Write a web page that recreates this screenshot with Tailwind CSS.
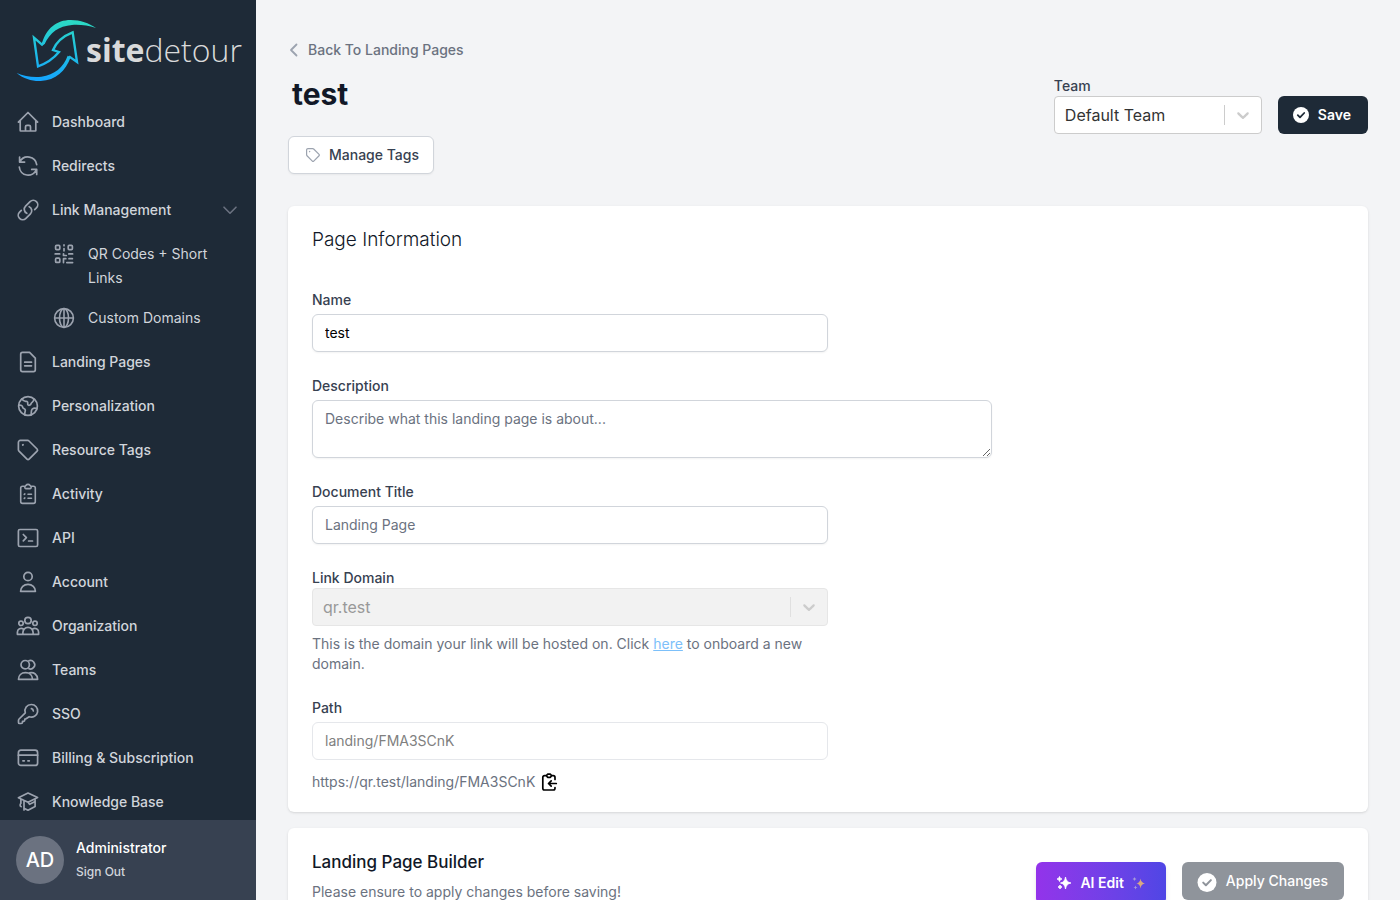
<!DOCTYPE html>
<html lang="en">
<head>
<meta charset="utf-8">
<meta name="viewport" content="width=device-width, initial-scale=1">
<title>Landing Page - sitedetour</title>
<script src="https://cdn.jsdelivr.net/npm/@tailwindcss/browser@4"></script>
</head>
<body class="flex h-screen overflow-hidden bg-[#f3f4f6] font-['Inter',sans-serif] text-sm text-[#374151]">

<aside class="flex w-64 shrink-0 flex-col bg-[#1e2a37]">
  <a href="#" aria-label="sitedetour" class="flex h-[102px] shrink-0 items-start pl-4">
    <svg class="mt-4 h-[68px] w-[82px] shrink-0" viewBox="48 48 246 204" fill="none">
      <defs>
        <linearGradient id="brand" gradientUnits="userSpaceOnUse" x1="170" y1="60" x2="150" y2="245">
          <stop offset="0" stop-color="#2bd9c5"/><stop offset="1" stop-color="#14a5ff"/>
        </linearGradient>
      </defs>
      <path fill="url(#brand)" d="M124 136C138 84 170 60 212 60C242 60 266 69 288 84C264 77 240 73 216 75C176 78 150 98 134 132ZM50 219C72 237 96 244 122 243C168 241 196 214 212 172L203 167C190 202 164 224 124 230C98 233 72 228 50 219Z"/>
      <path stroke="url(#brand)" stroke-width="7" d="M132 128L126 134L102 113L114 199C140 190 162 174 177 156L159 150C168 128 190 108 218 97L231 186L207 169"/>
    </svg>
    <span class="-ml-3 mt-7 font-['Open_Sans',sans-serif] text-[32px] leading-[44px] text-[#d9dadb]"><span class="font-bold">site</span><span class="font-light">detour</span></span>
  </a>

  <nav class="min-h-0 flex-1 overflow-hidden text-sm font-medium leading-6 text-[#d1d5db] [&_svg]:shrink-0 [&_svg]:text-[#9ca3af]">
    <ul class="flex flex-col gap-1">
      <li><a href="#" class="flex gap-3 px-4 py-2">
        <svg class="size-6" viewBox="0 0 24 24" fill="none" stroke="currentColor" stroke-width="1.7" stroke-linecap="round" stroke-linejoin="round"><path d="M2.4 12.2 12 2.5l9.6 9.7M4.2 10.400V20.500a.5.5 0 0 0 .5.5h14.600a.5.5 0 0 0 .5-.5V10.400M9.500 20.800v-4a1.500 1.500 0 0 1 1.500-1.500h2a1.500 1.500 0 0 1 1.500 1.500v4"/></svg>Dashboard</a></li>
      <li><a href="#" class="flex gap-3 px-4 py-2">
        <svg class="size-6" viewBox="0 0 24 24" fill="none" stroke="currentColor" stroke-width="1.7" stroke-linecap="round" stroke-linejoin="round"><path d="M3.600 3.100v5h5M3.900 7.900A8.900 8.900 0 0 1 20.700 10.600M20.700 20.400v-5h-5M20.400 15.600A8.900 8.900 0 0 1 3.300 13"/></svg>Redirects</a></li>
      <li>
        <button type="button" aria-expanded="true" class="flex w-full gap-3 px-4 py-2 text-left">
          <svg class="size-6" viewBox="0 0 24 24" fill="none" stroke="currentColor" stroke-width="1.7" stroke-linecap="round" stroke-linejoin="round"><path d="M13.190 8.688a4.500 4.500 0 0 1 1.242 7.244l-4.500 4.500a4.500 4.500 0 0 1-6.364-6.364l1.757-1.757m13.350-.622 1.757-1.757a4.500 4.500 0 0 0-6.364-6.364l-4.500 4.500a4.500 4.500 0 0 0 1.242 7.244"/></svg>
          <span class="flex-1">Link Management</span>
          <svg class="mt-0.5 size-5" viewBox="0 0 20 20" fill="none" stroke="#6b7280" stroke-width="1.6" stroke-linecap="round" stroke-linejoin="round"><path d="m4 7.200 6 6 6-6"/></svg>
        </button>
        <ul class="mt-1 font-normal">
          <li><a href="#" class="flex gap-3 py-2 pl-[52px] pr-8">
            <svg class="size-6" viewBox="0 0 24 24" fill="none" stroke="currentColor" stroke-width="1.7" stroke-linecap="round" stroke-linejoin="round"><rect x="3.600" y="3.400" width="4.200" height="4.200" rx="1"/><rect x="16.200" y="3.400" width="4.200" height="4.200" rx="1"/><rect x="3.600" y="16.200" width="4.200" height="4.200" rx="1"/><path d="M12 2.900v.8M12 6.600v2.200M3.200 11.900h4.500M11.500 11.800v1.700h2.800M16.800 11.900h3.800M11.500 20.600v-3.900h2.300M14.800 20.600h5.800M17 16.700h3.400"/></svg><span>QR Codes + Short Links</span></a></li>
          <li><a href="#" class="flex gap-3 py-2 pl-[52px] pr-8">
            <svg class="size-6" viewBox="0 0 24 24" fill="none" stroke="currentColor" stroke-width="1.6"><circle cx="12" cy="12" r="9.400"/><ellipse cx="12" cy="12" rx="4.500" ry="9.400"/><path d="M12 2.600v18.800M2.600 12h18.800"/></svg>Custom Domains</a></li>
        </ul>
      </li>
      <li><a href="#" class="flex gap-3 px-4 py-2">
        <svg class="size-6" viewBox="0 0 24 24" fill="none" stroke="currentColor" stroke-width="1.7" stroke-linecap="round" stroke-linejoin="round"><path d="M4.700 4.200a1.800 1.800 0 0 1 1.800-1.800h7.100l5.700 5.700v11.700a1.800 1.800 0 0 1-1.800 1.800h-11a1.800 1.800 0 0 1-1.800-1.800ZM8.700 12.200h6.800M8.700 15.800h6.800"/></svg>Landing Pages</a></li>
      <li><a href="#" class="flex gap-3 px-4 py-2">
        <svg class="size-6" viewBox="0 0 24 24" fill="none" stroke="currentColor" stroke-width="1.7" stroke-linecap="round" stroke-linejoin="round"><circle cx="12" cy="12" r="9.400"/><path d="M6 4.800c1 2 2.200 2.700 4.100 2.500 1.300-.1 1.800.9 1.600 2.300-.2 1.500 1 2.100 2.200 1.500 1.400-.7 1-2.100 2.300-2.800 1-.6 1.700-1.600 1.600-3.300M2.800 11.200c2.700-.3 3.800.7 3.900 2.200.1 1.200 1.900 1 2.500 2.300.6 1.200-.8 2.200-.4 4.900M20.900 14.600c-1.700-.8-3.500-.5-4.700.6-1.400 1.300-.6 2.900-1.100 5.600"/></svg>Personalization</a></li>
      <li><a href="#" class="flex gap-3 px-4 py-2">
        <svg class="size-6" viewBox="0 0 24 24" fill="none" stroke="currentColor" stroke-width="1.7" stroke-linecap="round" stroke-linejoin="round"><path d="M2.400 4.400a2 2 0 0 1 2-2h7.200a2 2 0 0 1 1.400.6l8.100 8a1.500 1.500 0 0 1 0 2.100l-8 8a1.500 1.500 0 0 1-2.100 0l-8-8a2 2 0 0 1-.6-1.400ZM6.700 7l.4-.3"/></svg>Resource Tags</a></li>
      <li><a href="#" class="flex gap-3 px-4 py-2">
        <svg class="size-6" viewBox="0 0 24 24" fill="none" stroke="currentColor" stroke-width="1.6" stroke-linecap="round" stroke-linejoin="round"><path d="M9.300 4.300H6.500a1.800 1.800 0 0 0-1.800 1.800v13.500a1.800 1.800 0 0 0 1.800 1.800h11a1.800 1.800 0 0 0 1.800-1.800V6.100a1.800 1.800 0 0 0-1.800-1.800h-2.800M9.300 4c.6-.1.8-1.600 2.700-1.600s2.100 1.500 2.700 1.600c.8.2.7 2.600-.6 2.600H9.900C8.600 6.600 8.500 4.200 9.300 4ZM12 12.200h3.500M12 16.200h3.500M8.300 12.400l.6-.5M8.300 16.400l.6-.5"/></svg>Activity</a></li>
      <li><a href="#" class="flex gap-3 px-4 py-2">
        <svg class="size-6" viewBox="0 0 24 24" fill="none" stroke="currentColor" stroke-width="1.7" stroke-linecap="round" stroke-linejoin="round"><rect x="2.400" y="3.500" width="19.200" height="17" rx="1.500"/><path d="m7.300 8.500 3.100 3.200-3.100 3.200M12.600 15h3.900"/></svg>API</a></li>
      <li><a href="#" class="flex gap-3 px-4 py-2">
        <svg class="size-6" viewBox="0 0 24 24" fill="none" stroke="currentColor" stroke-width="1.7" stroke-linejoin="round"><circle cx="12" cy="6.500" r="4.200"/><path d="M4.600 21.300c0-4.100 3.200-7 7.400-7s7.400 2.900 7.400 7Z"/></svg>Account</a></li>
      <li><a href="#" class="flex gap-3 px-4 py-2">
        <svg class="size-6" viewBox="0 0 24 24" fill="none" stroke="currentColor" stroke-width="1.7" stroke-linejoin="round"><circle cx="12" cy="6.500" r="3.200"/><circle cx="5" cy="9.300" r="2.200"/><circle cx="19" cy="9.300" r="2.200"/><path d="M6.900 20.300v-1.800a5.100 5.100 0 0 1 10.200 0v1.800ZM6.900 20.300H1.400v-2a3.900 3.900 0 0 1 6-3.300M17.100 20.300h5.500v-2a3.900 3.900 0 0 0-6-3.300"/></svg>Organization</a></li>
      <li><a href="#" class="flex gap-3 px-4 py-2">
        <svg class="size-6" viewBox="0 0 24 24" fill="none" stroke="currentColor" stroke-width="1.7" stroke-linejoin="round"><circle cx="9.200" cy="6.700" r="4.200"/><path d="M12.300 3.100a4.200 4.200 0 1 1 0 7.200M2.500 21.300c0-4 2.800-6.600 7-6.600s7 2.600 7 6.600ZM13.300 14.900c4.800-1 8.300 1.800 8.300 6.400h-5.100"/></svg>Teams</a></li>
      <li><a href="#" class="flex gap-3 px-4 py-2">
        <svg class="size-6" viewBox="0 0 24 24" fill="none" stroke="currentColor" stroke-width="1.7" stroke-linecap="round" stroke-linejoin="round"><path d="M15.300 2.500a6.300 6.300 0 0 0-6 8.300l-6.200 6.200a2 2 0 0 0-.6 1.400v2.100a1 1 0 0 0 1 1h1.700a1.300 1.300 0 0 0 1.300-1.300v-.9h1a1.300 1.300 0 0 0 1.300-1.300v-1h.8l3.600-2.300a6.300 6.300 0 1 0 2.100-12.200ZM15.400 6.700a2.500 2.500 0 0 1 1.900 2.300"/></svg>SSO</a></li>
      <li><a href="#" class="flex gap-3 px-4 py-2">
        <svg class="size-6" viewBox="0 0 24 24" fill="none" stroke="currentColor" stroke-width="1.7" stroke-linecap="round"><rect x="2.400" y="4.200" width="19.200" height="15.200" rx="2.500"/><path d="M2.400 9.200h19.200M6.900 14.800h1.400M11.900 14.800h1.400"/></svg>Billing &amp; Subscription</a></li>
      <li><a href="#" class="flex gap-3 px-4 py-2">
        <svg class="size-6" viewBox="0 0 24 24" fill="none" stroke="currentColor" stroke-width="1.7" stroke-linecap="round" stroke-linejoin="round"><path d="m12 3 9.600 4.500L12 12.200 2.400 7.700ZM4.900 9v4.300M19.100 9v7.500L12 20.200l-3.500-1.700M4.900 13.300c-1.200 1.400-.8 2.800.2 3.300M8 10.300v9.700M12 12.200l1.600 2.100 5.500-2.700"/></svg>Knowledge Base</a></li>
    </ul>
  </nav>

  <div class="flex h-20 shrink-0 items-center gap-3 bg-[#374151] px-4">
    <span class="flex size-12 items-center justify-center rounded-full bg-[#6b7280] text-xl font-medium text-white">AD</span>
    <div>
      <p class="text-sm leading-6 font-medium text-white">Administrator</p>
      <a href="#" class="block text-xs leading-6 font-medium text-[#d1d5db]">Sign Out</a>
    </div>
  </div>
</aside>

<main class="min-w-0 flex-1 overflow-y-auto px-8 pt-10 pb-8 [scrollbar-width:none]">
  <a href="#" class="flex w-fit items-center text-sm leading-5 font-medium text-[#6b7280]">
    <svg class="mr-2 h-5 w-3" viewBox="0 0 12 20" fill="none" stroke="#9ca3af" stroke-width="1.800" stroke-linecap="round" stroke-linejoin="round"><path d="M8.500 4.500 3 10l5.500 5.500"/></svg>Back To Landing Pages
  </a>

  <header class="mt-4 flex items-start justify-between">
    <div>
      <h1 class="pl-1 text-[30px] leading-9 font-bold text-[#111827]">test</h1>
      <button type="button" class="mt-6 flex h-[38px] items-center gap-2 rounded-md border border-[#d1d5db] bg-white pr-3.5 pl-4 font-medium text-[#374151] shadow-xs">
        <svg class="size-4" viewBox="0 0 24 24" fill="none" stroke="#9ca3af" stroke-width="1.800" stroke-linecap="round" stroke-linejoin="round"><path d="M2.400 4.400a2 2 0 0 1 2-2h7.200a2 2 0 0 1 1.400.6l8.100 8a1.500 1.500 0 0 1 0 2.100l-8 8a1.500 1.500 0 0 1-2.100 0l-8-8a2 2 0 0 1-.6-1.400ZM6.700 7l.4-.3"/></svg>Manage Tags
      </button>
    </div>
    <div class="flex items-end gap-4">
      <div>
        <label for="team" class="block leading-5 font-medium">Team</label>
        <div class="relative w-52">
          <select id="team" class="h-[38px] w-full appearance-none rounded-sm border border-[#cccccc] bg-white px-[10px] text-base text-[#333333]"><option>Default Team</option></select>
          <div class="pointer-events-none absolute inset-y-0 right-px flex items-center">
            <span class="h-5 w-px bg-[#cccccc]"></span>
            <svg class="m-2 size-5" viewBox="0 0 20 20" fill="#cccccc"><path d="M4.516 7.548c.436-.446 1.043-.481 1.576 0L10 11.295l3.908-3.747c.533-.481 1.141-.446 1.574 0 .436.445.408 1.197 0 1.615-.406.418-4.695 4.502-4.695 4.502a1.095 1.095 0 0 1-1.576 0S4.924 9.581 4.516 9.163s-.436-1.170 0-1.615z"/></svg>
          </div>
        </div>
      </div>
      <button type="button" class="flex h-[38px] items-center gap-2 rounded-md bg-[#1e2a37] pr-[17px] pl-[14px] font-semibold text-white">
        <svg class="size-[18px]" viewBox="0 0 18 18" fill="none"><circle cx="9" cy="9" r="8" fill="#fff"/><path d="m5.800 9.200 2.200 2.200 4.200-4.400" stroke="#1e2a37" stroke-width="1.800" stroke-linecap="round" stroke-linejoin="round"/></svg>Save
      </button>
    </div>
  </header>

  <section class="mt-8 rounded-md bg-white px-6 py-5 shadow">
    <h2 class="text-[19px] leading-7 font-light text-[#111827]">Page Information</h2>
    <form class="mt-9 flex flex-col gap-6">
      <div>
        <label for="name" class="block leading-5 font-medium">Name</label>
        <input id="name" type="text" value="test" class="mt-1 block h-[38px] w-1/2 rounded-md border border-[#d1d5db] bg-white px-3 pb-0.5 text-black shadow-xs">
      </div>
      <div>
        <label for="description" class="block leading-5 font-medium">Description</label>
        <textarea id="description" rows="2" placeholder="Describe what this landing page is about..." class="mt-1 block h-[58px] w-full max-w-[680px] rounded-md border border-[#d1d5db] bg-white px-3 py-2 leading-5 shadow-xs placeholder:text-[#6b7280]"></textarea>
      </div>
      <div>
        <label for="doctitle" class="block leading-5 font-medium">Document Title</label>
        <input id="doctitle" type="text" placeholder="Landing Page" class="mt-1 block h-[38px] w-1/2 rounded-md border border-[#d1d5db] bg-white px-3 pb-0.5 shadow-xs placeholder:text-[#6b7280]">
      </div>
      <div class="w-1/2">
        <label for="domain" class="block leading-5 font-medium">Link Domain</label>
        <div class="relative">
          <select id="domain" disabled class="h-[38px] w-full appearance-none rounded-sm border border-[#e6e6e6] bg-[#f2f2f2] px-[10px] text-base text-[#999999] opacity-100"><option>qr.test</option></select>
          <div class="pointer-events-none absolute inset-y-0 right-px flex items-center">
            <span class="h-5 w-px bg-[#e0e0e0]"></span>
            <svg class="m-2 size-5" viewBox="0 0 20 20" fill="#cccccc"><path d="M4.516 7.548c.436-.446 1.043-.481 1.576 0L10 11.295l3.908-3.747c.533-.481 1.141-.446 1.574 0 .436.445.408 1.197 0 1.615-.406.418-4.695 4.502-4.695 4.502a1.095 1.095 0 0 1-1.576 0S4.924 9.581 4.516 9.163s-.436-1.170 0-1.615z"/></svg>
          </div>
        </div>
        <p class="mt-2 leading-5 text-[#6b7280]">This is the domain your link will be hosted on. Click <a href="#" class="text-[#7cc0fa] underline">here</a> to onboard a new domain.</p>
      </div>
      <div>
        <label for="path" class="block leading-5 font-medium">Path</label>
        <input id="path" type="text" value="landing/FMA3SCnK" disabled class="mt-1 block h-[38px] w-1/2 rounded-md border border-[#e5e7eb] bg-white px-3 pb-0.5 text-[#808080]">
        <div class="mt-3 flex items-center gap-1 leading-5 text-[#6b7280]">
          <span>https://qr.test/landing/FMA3SCnK</span>
          <button type="button" aria-label="Copy URL" class="text-black">
            <svg class="size-5" viewBox="0 0 20 20" fill="none" stroke="currentColor" stroke-width="1.700" stroke-linecap="round" stroke-linejoin="round"><path d="M7 3.700H5.500A1.700 1.700 0 0 0 3.800 5.400v10.900A1.700 1.700 0 0 0 5.500 18h8.800a1.700 1.700 0 0 0 1.700-1.700v-.8M13 3.700h1.300A1.700 1.700 0 0 1 16 5.400v2M7.400 3.800 8.600 2.200h2.800l1.200 1.600-1.200 1.500H8.600ZM17.300 11.500H9.500M12.200 8.800l-2.700 2.700 2.700 2.700"/></svg>
          </button>
        </div>
      </div>
    </form>
  </section>

  <section class="mt-4 flex items-start justify-between rounded-md bg-white px-6 py-5 shadow">
    <div>
      <h2 class="text-[17px] leading-7 font-medium text-[#111827]">Landing Page Builder</h2>
      <p class="mt-1.5 leading-5 text-[#6b7280]">Please ensure to apply changes before saving!</p>
    </div>
    <div class="mt-3.5 flex items-start gap-4">
      <button type="button" class="flex h-[42px] items-center gap-2 rounded-md bg-linear-to-r from-[#9333ea] to-[#4f46e5] px-5 font-semibold text-white shadow-md">
        <svg class="size-4" viewBox="0 0 16 16" fill="#fff"><path d="M9.500 2Q10.200 7.300 15 8Q10.200 8.700 9.500 14Q8.800 8.700 4.500 8Q8.800 7.300 9.500 2ZM3.500 1.500Q3.800 3.700 6 4Q3.800 4.300 3.500 6.500Q3.200 4.300 1 4Q3.200 3.700 3.500 1.500ZM4 10Q4.300 11.700 6 12Q4.300 12.300 4 14Q3.700 12.300 2 12Q3.700 11.700 4 10Z" stroke="#fff" stroke-width=".8"/></svg>
        AI Edit
        <svg class="size-[14px]" viewBox="0 0 14 14"><path fill="#d9a982" d="M8.500 2.500Q9 6.700 13 7.500Q9 8.200 8.500 12.500Q8 8.200 4.500 7.500Q8 6.700 8.500 2.500Z"/><path fill="#a79bd8" d="M2.500 1Q2.700 2.700 4.500 3Q2.700 3.300 2.500 5Q2.300 3.300.5 3Q2.300 2.700 2.500 1ZM3.500 9.500Q3.700 11.300 5.500 11.500Q3.700 11.700 3.500 13.500Q3.300 11.700 1.500 11.500Q3.300 11.300 3.500 9.500Z"/></svg>
      </button>
      <button type="button" disabled class="flex h-[38px] items-center gap-2 rounded-md bg-[#8f949b] pr-4 pl-[14px] font-medium text-white">
        <svg class="size-[22px]" viewBox="0 0 22 22" fill="none"><circle cx="11" cy="12.500" r="9.500" fill="#fff"/><path d="m7.200 12.600 2.700 2.700 5-5.200" stroke="#8f949b" stroke-width="2" stroke-linecap="round" stroke-linejoin="round"/></svg>Apply Changes
      </button>
    </div>
  </section>
</main>
</body>
</html>
